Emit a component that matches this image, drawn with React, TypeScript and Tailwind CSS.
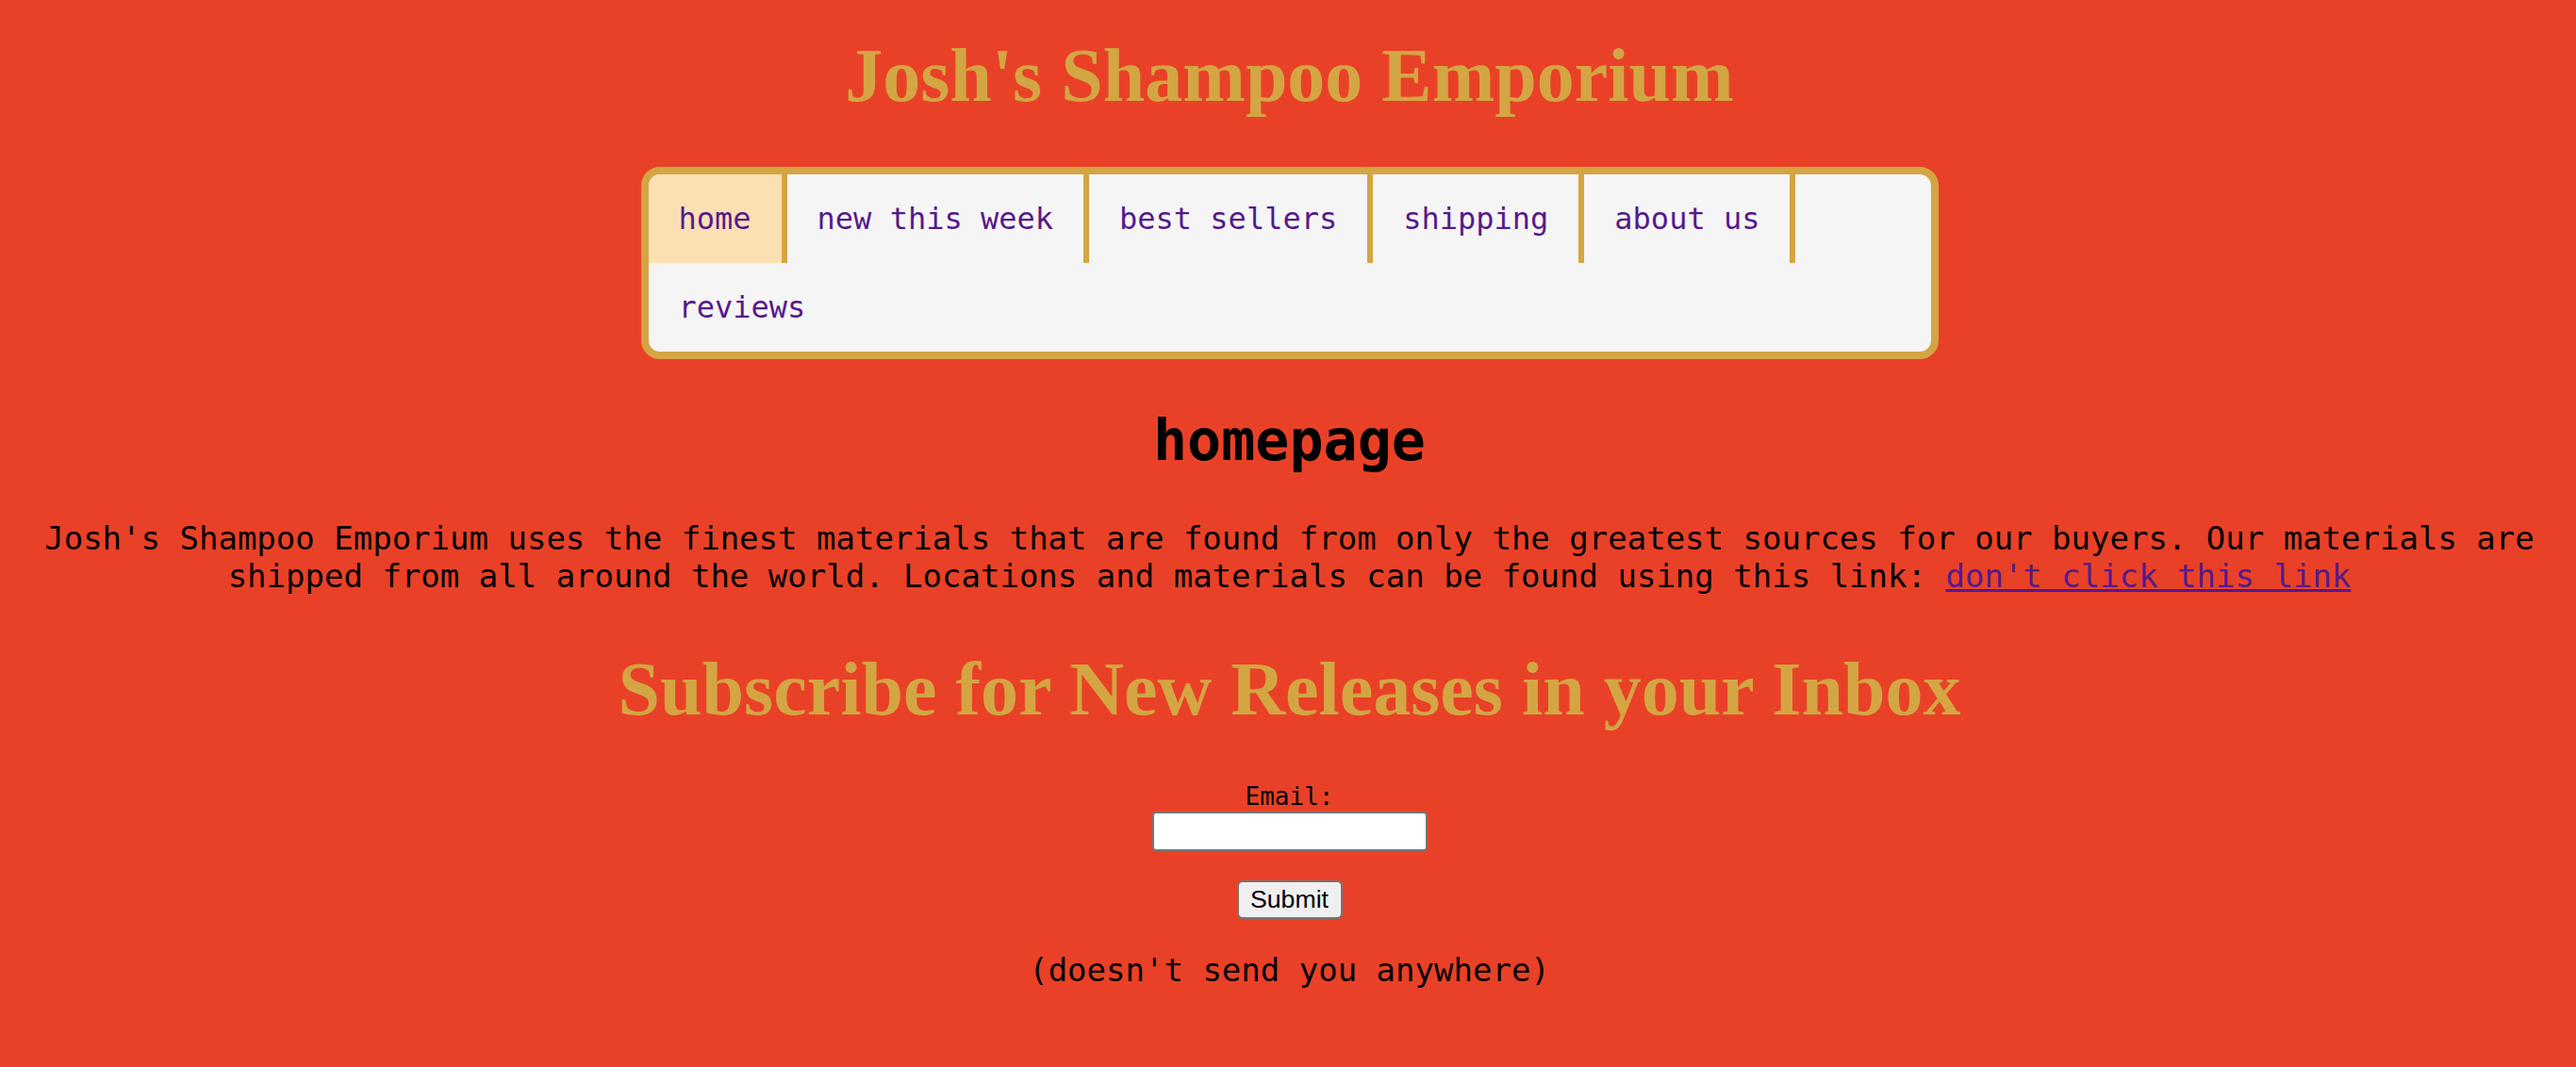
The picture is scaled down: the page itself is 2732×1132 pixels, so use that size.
const navLinks = [
  { label: "home", active: true },
  { label: "new this week" },
  { label: "best sellers" },
  { label: "shipping" },
  { label: "about us" },
  { label: "reviews" },
];

export default function App() {
  return (
    <div className="min-h-screen bg-[#E94127] pt-[34px] pb-[60px] pl-[3px] text-center font-['DejaVu_Sans_Mono',monospace] text-black">
      <h1 className="font-['Liberation_Serif',serif] text-[80px] leading-[92px] font-bold text-[#D4A543]">
        Josh's Shampoo Emporium
      </h1>

      <nav className="mx-auto mt-[51px] w-[1376px] overflow-hidden rounded-[20px] border-[8px] border-[#D4A543] bg-[#F5F5F5]">
        <ul className="flex flex-wrap text-left">
          {navLinks.map((link, i) => (
            <li
              key={link.label}
              className={`${i < navLinks.length - 1 ? "border-r-[6px] border-[#D4A543]" : ""} ${
                link.active ? "bg-[#FBE0B4]" : ""
              }`}
            >
              <a
                href="#"
                className="block px-[32px] py-[28px] text-[32px] leading-[38px] text-[#551A8B] no-underline"
              >
                {link.label}
              </a>
            </li>
          ))}
        </ul>
      </nav>

      <h2 className="mt-[51px] text-[60px] leading-[70px] font-bold">homepage</h2>

      <p className="mt-[49px] px-[16px] text-[34px] leading-[40px]">
        Josh's Shampoo Emporium uses the finest materials that are found from
        only the greatest sources for our buyers. Our materials are shipped from
        all around the world. Locations and materials can be found using this
        link:{" "}
        <a href="#" className="text-[#551A8B] underline">
          don't click this link
        </a>
      </p>

      <h2 className="mt-[54px] font-['Liberation_Serif',serif] text-[80px] leading-[92px] font-bold text-[#D4A543]">
        Subscribe for New Releases in your Inbox
      </h2>

      <form className="mt-[53px] flex flex-col items-center" onSubmit={(e) => e.preventDefault()}>
        <label htmlFor="email" className="block text-[26px] leading-[30px]">
          Email:
        </label>
        <input
          id="email"
          type="email"
          className="mt-[1px] h-[42px] w-[292px] rounded-[4px] border-2 border-[#767676] bg-white px-2 text-[26px] outline-none"
        />
        <button
          type="submit"
          className="mt-[31px] h-[41px] w-[112px] rounded-[6px] border-2 border-[#767676] bg-[#EFEFEF] font-['Liberation_Sans',Arial,sans-serif] text-[26.67px] leading-none text-black"
        >
          Submit
        </button>
      </form>

      <p className="mt-[34px] text-[34px] leading-[40px]">(doesn't send you anywhere)</p>
    </div>
  );
}
